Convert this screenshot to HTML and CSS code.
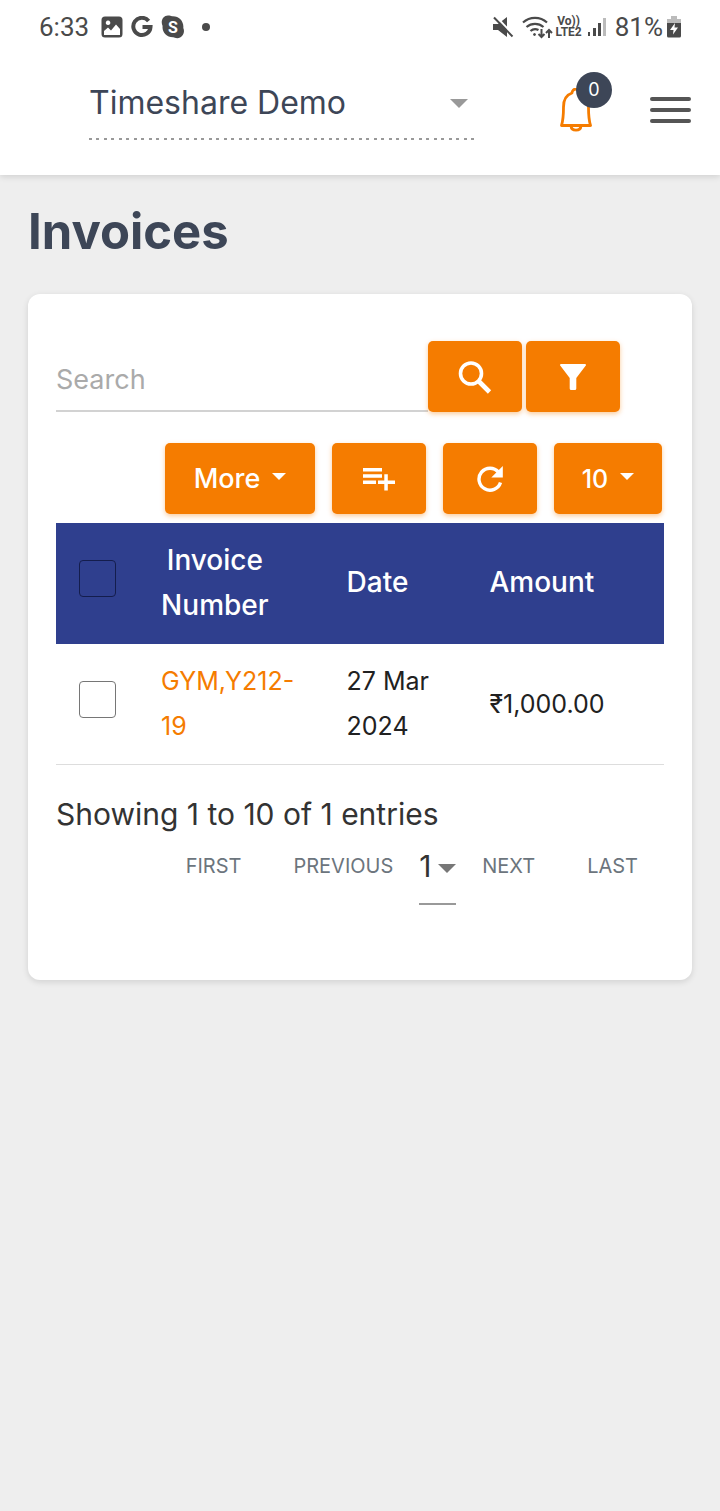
FILE: index.html
```html
<!DOCTYPE html>
<html lang="en">
<head>
<meta charset="utf-8">
<meta name="viewport" content="width=device-width, initial-scale=1">
<title>Invoices</title>
<link rel="stylesheet" href="styles.css">
</head>
<body>
<header class="top">
  <div class="status">
    <div class="status-group status-left">
      <span class="clock">6:33</span>
      <svg width="22" height="22" viewBox="0 0 22 22" aria-hidden="true"><path fill="#4a4a4a" fill-rule="evenodd" d="M4 0.500h14a3.500 3.500 0 0 1 3.500 3.500v14a3.500 3.500 0 0 1-3.500 3.500H4A3.500 3.500 0 0 1 .5 18V4A3.500 3.500 0 0 1 4 .5zM3 19h16v-6l-4-4.500-5 6-3-3L3 15zM7 4.500a2.300 2.300 0 1 0 .1 0z"/></svg>
      <svg width="22" height="22" viewBox="0 0 22 22" aria-hidden="true"><path fill="none" stroke="#4a4a4a" stroke-width="4" d="M17.600 5A8.600 8.600 0 1 0 19.500 11H11.500"/></svg>
      <svg width="24" height="24" viewBox="0 0 24 24" aria-hidden="true"><path fill="#4a4a4a" d="M7 .5c2 0 3 .6 4 .8 7-.5 12 5 11.300 11.700 2 4-.5 10-6 10.300-2 0-3-.8-4-1C5.500 22.500.8 17 1.600 11-.8 6 2 .6 7 .5z"/><text class="app-letter" x="12" y="18" text-anchor="middle">S</text></svg>
      <i class="dot"></i>
    </div>
    <div class="status-group status-right">
      <svg class="mute" width="21" height="22" viewBox="0 0 21 22" aria-hidden="true"><path fill="#4a4a4a" d="M0 8h5l9-7v20l-9-7H0z"/><path stroke="#fff" stroke-width="2" d="M3 .5l18 19"/><path stroke="#4a4a4a" stroke-width="2" d="M1 1.500l18.500 19"/></svg>
      <svg class="wifi" width="31" height="24" viewBox="0 0 31 24" fill="none" stroke="#4a4a4a" stroke-width="2.200" aria-hidden="true"><path d="M1 7.500a18 18 0 0 1 24 0M4.500 12a13 13 0 0 1 17 0M8.500 16a7 7 0 0 1 8-1"/><circle cx="12.500" cy="19.500" r="1" fill="#4a4a4a" stroke-width="1"/><path stroke-width="2" d="M19.500 14v8m-3-3l3 3 3-3M27 23v-8m-3 3l3-3 3 3"/></svg>
      <span class="volte"><span>Vo))</span><span>LTE2</span></span>
      <svg class="signal" width="18" height="20" viewBox="0 0 18 20" aria-hidden="true"><path fill="#4a4a4a" d="M0 15h2v4H0zM5 11h3v8H5zM10 6h3v13h-3z"/><path fill="#bbb" d="M15 1h3v18h-3z"/></svg>
      <span class="charge">81%</span>
      <svg width="14" height="22" viewBox="0 0 14 22" aria-hidden="true"><path fill="#bbb" d="M4 0h6v3h4v5H0V3h4z"/><path fill="#4a4a4a" d="M0 7h14v13a1.500 1.500 0 0 1-1.500 1.500h-11A1.500 1.500 0 0 1 0 20z"/><path fill="#fff" d="M8 7L3 14h3.500L6 18.500l5-7H7.500z"/></svg>
    </div>
  </div>
  <div class="bar">
    <div class="select-wrap company">
      <select aria-label="Company"><option>Timeshare Demo</option></select>
    </div>
    <button class="plain bell" aria-label="Notifications">
      <svg width="34" height="44" viewBox="0 0 34 44" fill="none" stroke="#f57c00" stroke-width="2.800" stroke-linejoin="round" aria-hidden="true"><path d="M13 5a4 4 0 0 1 8 0C27 7 29.500 12 29.500 19c0 9 .3 13 2 18.500H2.500C4.200 32 4.500 28 4.500 19 4.500 12 7 7 13 5zM12 38c.5 5.500 9.500 5.500 10 0"/></svg>
      <span class="badge">0</span>
    </button>
    <button class="plain menu" aria-label="Menu"><i></i><i></i><i></i></button>
  </div>
</header>
<main class="page">
  <h1>Invoices</h1>
  <section class="card">
    <form class="search">
      <input type="text" placeholder="Search" aria-label="Search">
      <button class="btn" type="button" aria-label="Search">
        <svg width="34" height="34" viewBox="0 0 34 34" fill="none" stroke="#fff" aria-hidden="true"><circle cx="13" cy="13.500" r="10.500" stroke-width="3.600"/><path stroke-width="4.600" d="M21 21.500l10.500 10.500"/></svg>
      </button>
      <button class="btn" type="button" aria-label="Filter">
        <svg width="26" height="26" viewBox="0 0 26 26" fill="#fff" aria-hidden="true"><path d="M1 0h24a1 1 0 0 1 .8 1.600L16.300 14v10.500a1.500 1.500 0 0 1-1.500 1.500h-3.600a1.500 1.500 0 0 1-1.500-1.500V14L.2 1.600A1 1 0 0 1 1 0z"/></svg>
      </button>
    </form>
    <div class="tools">
      <button class="btn more">More<i class="caret"></i></button>
      <button class="btn" aria-label="Add to list"><svg class="add" width="32" height="24" viewBox="0 0 32 24" fill="#fff" aria-hidden="true"><path d="M0 1h19v3.500H0zM0 7.200h19v3.500H0zM0 13.500h13V17H0zM21.300 7.200h3.500v6.300H32V17h-7.200v6.500h-3.500V17H15v-3.500h6.300z"/></svg></button>
      <button class="btn" aria-label="Refresh"><svg width="26" height="26" viewBox="0 0 26 26" aria-hidden="true"><path fill="none" stroke="#fff" stroke-width="3.400" d="M21.500 6.200A11 11 0 1 0 23.500 16.500"/><path fill="#fff" d="M25.800 0v11.500H14.300z"/></svg></button>
      <button class="btn size">10<i class="caret"></i></button>
    </div>
    <table class="grid">
      <colgroup><col class="c-check"><col class="c-number"><col class="c-date"><col class="c-amount"></colgroup>
      <thead>
        <tr>
          <th class="check"><input type="checkbox" aria-label="Select all invoices"></th>
          <th><span class="stacked">Invoice Number</span></th>
          <th>Date</th>
          <th>Amount</th>
        </tr>
      </thead>
      <tbody>
        <tr>
          <td class="check"><input type="checkbox" aria-label="Select invoice GYM,Y212-19"></td>
          <td><a href="#">GYM,Y212-19</a></td>
          <td>27 Mar 2024</td>
          <td>₹1,000.00</td>
        </tr>
      </tbody>
    </table>
    <p class="summary">Showing 1 to 10 of 1 entries</p>
    <nav class="pager" aria-label="Pagination">
      <button class="plain step">FIRST</button>
      <button class="plain step">PREVIOUS</button>
      <div class="select-wrap number">
        <select aria-label="Page"><option>1</option></select>
      </div>
      <button class="plain step">NEXT</button>
      <button class="plain step">LAST</button>
    </nav>
  </section>
</main>
</body>
</html>
```
FILE: styles.css
```css
* { box-sizing: border-box; }

body {
  margin: 0;
  min-height: 100vh;
  background: #eeeeee;
  color: #212121;
  font-family: Inter, "Open Sans", sans-serif;
}

button, input, select { font: inherit; color: inherit; }

svg { display: block; flex: none; }

.plain {
  border: 0;
  padding: 0;
  background: none;
}

.top {
  background: #fff;
  box-shadow: 0 2px 6px rgba(0, 0, 0, 0.12);
}

/* Device status line */
.status {
  display: flex;
  justify-content: space-between;
  height: 54px;
  padding: 0 39px;
  font-family: Roboto, sans-serif;
  font-size: 26px;
  color: #4a4a4a;
}

.status-group { display: flex; align-items: center; }
.status-left { gap: 8px; }
.clock { margin-right: 4px; }

.app-letter {
  font: 700 16px Roboto, sans-serif;
  fill: #fff;
}

.dot {
  width: 8px;
  height: 8px;
  margin-left: 9px;
  border-radius: 50%;
  background: #4a4a4a;
}

.mute { margin-right: 8px; }
.wifi { margin-right: 2px; }

.volte {
  display: flex;
  flex-direction: column;
  align-items: center;
  margin-right: 6px;
  font-size: 12px;
  font-weight: 700;
  line-height: 11px;
}

.signal { margin-right: 9px; }
.charge { margin-right: 4px; }

/* Header controls */
.bar {
  display: flex;
  align-items: flex-start;
  height: 121px;
  padding: 12px 29px 0 89px;
}

.select-wrap { position: relative; }

.select-wrap select {
  display: block;
  width: 100%;
  padding: 0;
  border: 0;
  border-radius: 0;
  background: none;
  appearance: none;
}

.select-wrap::after {
  content: "";
  position: absolute;
  border: 9px solid transparent;
  border-bottom: 0;
  border-top-color: #999;
  pointer-events: none;
}

.company {
  flex: 1;
  margin-right: 84px;
}

.company select {
  height: 74px;
  padding-bottom: 2px;
  background: repeating-linear-gradient(to right, #999 0 3px, transparent 3px 7px, #999 7px 10px, transparent 10px 15px) bottom / 100% 2px no-repeat;
  font-size: 32px;
  color: #3d4657;
}

.company::after { top: 33px; right: 7px; }

.bell {
  position: relative;
  margin: 22px 57px 0 0;
}

.badge {
  position: absolute;
  top: -16px;
  left: 17px;
  width: 36px;
  height: 36px;
  border-radius: 50%;
  background: #3d4657;
  color: #fff;
  font-size: 18px;
  line-height: 35px;
  text-align: center;
}

.menu {
  display: flex;
  flex-direction: column;
  gap: 7px;
  width: 41px;
  margin-top: 31px;
}

.menu i {
  height: 4px;
  border-radius: 2px;
  background: #555;
}

/* Page */
.page { padding: 28px; }

h1 {
  margin: 0 0 33px;
  font-size: 49px;
  line-height: 58px;
  font-weight: 700;
  color: #3d4657;
}

.card {
  padding: 47px 28px 75px;
  border-radius: 12px;
  background: #fff;
  box-shadow: 0 2px 6px rgba(0, 0, 0, 0.12);
}

.search {
  display: flex;
  gap: 4px;
  padding-right: 44px;
}

.search input {
  flex: 1;
  min-width: 0;
  height: 71px;
  margin-right: -4px;
  padding: 8px 0 0;
  border: 0;
  border-bottom: 2px solid #d2d2d2;
  background: none;
  font-size: 27px;
}

.search input::placeholder { color: #aaa; opacity: 1; }

.btn {
  display: flex;
  flex: none;
  align-items: center;
  justify-content: center;
  gap: 12px;
  width: 94px;
  height: 71px;
  padding: 0;
  border: 0;
  border-radius: 5px;
  background: #f57c00;
  box-shadow: 0 2px 5px rgba(245, 124, 0, 0.4);
  color: #fff;
  font-size: 27px;
  font-weight: 500;
}

.more { width: 150px; }
.size { width: 108px; font-size: 25px; }

.caret {
  border: 7px solid transparent;
  border-top-color: #fff;
  border-bottom: 0;
  margin-bottom: 4px;
}

.tools {
  display: flex;
  justify-content: flex-end;
  gap: 17px;
  margin: 31px 0 9px;
  padding-right: 2px;
}

/* Invoice table */
.grid {
  width: 100%;
  table-layout: fixed;
  border-collapse: separate;
  border-spacing: 0;
  font-size: 25px;
  line-height: 45px;
}

.c-check { width: 14%; }
.c-number { width: 30.5%; }
.c-date { width: 23.5%; }
.c-amount { width: 32%; }

.grid th, .grid td {
  height: 121px;
  padding: 15px 20px;
  text-align: left;
  vertical-align: middle;
}

.grid th {
  padding: 14px 20px 16px;
  background: #2f3f8e;
  color: #fff;
  font-size: 28px;
  font-weight: 500;
}

.grid td { border-bottom: 1px solid #ddd; }
.grid a { color: #f57c00; text-decoration: none; }

.stacked {
  display: inline-block;
  width: min-content;
  text-align: center;
  vertical-align: top;
}

.grid .check { padding: 0 0 10px 23px; }

.check input {
  display: block;
  width: 37px;
  height: 37px;
  margin: 0;
  border: 1px solid #767676;
  border-radius: 4px;
  appearance: none;
}

th.check input { border-color: #141d4d; }

/* Footer of the list */
.summary {
  margin: 26px 0 0;
  font-size: 30px;
  line-height: 46px;
  color: #333;
}

.pager {
  display: flex;
  justify-content: flex-end;
}

.step {
  height: 58px;
  padding: 0 26px;
  font-size: 20px;
  color: #6c757d;
}

.number { width: 37px; }

.number select {
  height: 68px;
  padding-bottom: 8px;
  border-bottom: 2px solid #999;
  font-size: 30px;
  color: #333;
}

.number::after {
  top: 27px;
  right: 0;
  border-top-color: #777;
}
```
